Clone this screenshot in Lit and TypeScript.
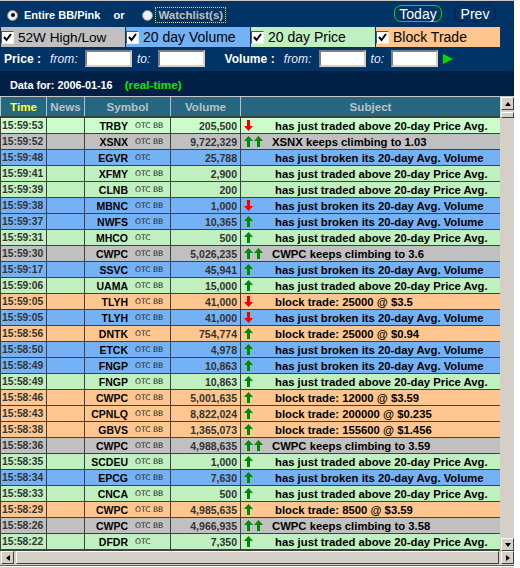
import { LitElement, html, css, svg } from "lit";
import { customElement } from "lit/decorators.js";

type Kind = "g" | "l" | "b" | "o" | "s";
const P = "has just traded above 20-day Price Avg.";
const V = "has just broken its 20-day Avg. Volume";
const ROWS: [string, string, string, string, string, Kind, string][] = [
  ["15:59:53", "TRBY", "OTC BB", "205,500", P, "l", "d"],
  ["15:59:52", "XSNX", "OTC BB", "9,722,329", "XSNX keeps climbing to 1.03", "s", "uu"],
  ["15:59:48", "EGVR", "OTC", "25,788", V, "b", ""],
  ["15:59:41", "XFMY", "OTC BB", "2,900", P, "g", ""],
  ["15:59:39", "CLNB", "OTC BB", "200", P, "g", ""],
  ["15:59:38", "MBNC", "OTC BB", "1,000", V, "b", "d"],
  ["15:59:37", "NWFS", "OTC BB", "10,365", V, "b", "u"],
  ["15:59:31", "MHCO", "OTC", "500", P, "g", "u"],
  ["15:59:30", "CWPC", "OTC BB", "5,026,235", "CWPC keeps climbing to 3.6", "s", "uu"],
  ["15:59:17", "SSVC", "OTC BB", "45,941", V, "b", "u"],
  ["15:59:06", "UAMA", "OTC BB", "15,000", P, "g", "u"],
  ["15:59:05", "TLYH", "OTC BB", "41,000", "block trade: 25000 @ $3.5", "o", "d"],
  ["15:59:05", "TLYH", "OTC BB", "41,000", V, "b", "d"],
  ["15:58:56", "DNTK", "OTC", "754,774", "block trade: 25000 @ $0.94", "o", "u"],
  ["15:58:50", "ETCK", "OTC BB", "4,978", V, "b", "u"],
  ["15:58:49", "FNGP", "OTC BB", "10,863", V, "b", "u"],
  ["15:58:49", "FNGP", "OTC BB", "10,863", P, "g", "u"],
  ["15:58:46", "CWPC", "OTC BB", "5,001,635", "block trade: 12000 @ $3.59", "o", "u"],
  ["15:58:43", "CPNLQ", "OTC BB", "8,822,024", "block trade: 200000 @ $0.235", "o", "u"],
  ["15:58:38", "GBVS", "OTC BB", "1,365,073", "block trade: 155600 @ $1.456", "o", "u"],
  ["15:58:36", "CWPC", "OTC BB", "4,988,635", "CWPC keeps climbing to 3.59", "s", "uu"],
  ["15:58:35", "SCDEU", "OTC BB", "1,000", P, "g", "u"],
  ["15:58:34", "EPCG", "OTC BB", "7,630", V, "b", "u"],
  ["15:58:33", "CNCA", "OTC BB", "500", P, "g", "u"],
  ["15:58:29", "CWPC", "OTC BB", "4,985,635", "block trade: 8500 @ $3.59", "o", "u"],
  ["15:58:26", "CWPC", "OTC BB", "4,966,935", "CWPC keeps climbing to 3.58", "s", "uu"],
  ["15:58:22", "DFDR", "OTC", "7,350", P, "g", "u"],
];

const up = svg`<path d="M4.5 0 L9 5 H6 V11 H3 V5 H0 Z" fill="#008a00"/>`;
const down = svg`<path d="M3 0 H6 V6 H9 L4.5 11 L0 6 H3 Z" fill="#ee0000"/>`;
const arrow = (c: string) =>
  html`<svg class="arr" width="9" height="11" viewBox="0 0 9 11">${c === "u" ? up : down}</svg>`;

@customElement("app-root")
export class AppRoot extends LitElement {
  static styles = css`
    :host { display: block; width: 514px; height: 568px; background: #d4d0c8; font-family: "Liberation Sans", sans-serif; overflow: hidden; }
    .top { background: #003366; border-top: 1px solid #c8c8c8; height: 70px; display: flex; flex-direction: column; color: #fff; }
    .r1 { height: 26px; display: flex; align-items: center; padding: 2px 0 0 7px; box-sizing: border-box; font: bold 11px "Liberation Sans", sans-serif; position: relative; }
    .radio { width: 9px; height: 9px; border-radius: 50%; background: #eeeeee; border: 1px solid #8a8a8a; display: flex; align-items: center; justify-content: center; box-sizing: content-box; flex: none; }
    .radio i { width: 4px; height: 4px; border-radius: 50%; background: #000; display: block; }
    .t1 { margin-left: 6px; }
    .or { margin-left: 13px; }
    .rw { margin-left: 18px; }
    .t2 { margin-left: 3px; padding: 1px 2px; color: #c0c0c0; outline: 1px dotted #dddd99; font-size: 11.5px; }
    .pill { position: absolute; top: 4px; height: 17px; border-radius: 7px; font: 14px "Liberation Sans", sans-serif; color: #fff; display: flex; align-items: center; justify-content: center; box-sizing: border-box; }
    .today { left: 394px; width: 48px; border: 1px solid #00dd00; }
    .prev { left: 454px; width: 42px; border: 1px solid #001a40; }
    .r2 { height: 20px; display: flex; padding-left: 1px; gap: 1px; }
    .cb { display: flex; align-items: center; font: 14px "Liberation Sans", sans-serif; color: #000; box-sizing: border-box; width: 124px; }
    .c1 { font-size: 13.6px; }
    .cb u { width: 13px; height: 13px; margin-right: 4px; background: #fff; border: 1px solid; border-color: #555 #eee #eee #555; display: flex; align-items: center; justify-content: center; flex: none; text-decoration: none; box-sizing: border-box; }
    .cb u svg { display: block; }
    .c1 { background: #c0c0c0; }
    .c2 { background: #75b2f5; }
    .c3 { background: #c0efc0; }
    .c4 { background: #ffc78f; }
    .r3 { height: 23px; display: flex; align-items: center; padding-left: 4px; }
    .lab { font: bold 12px "Liberation Sans", sans-serif; letter-spacing: 0.05px; }
    .it { font: italic 12px "Liberation Sans", sans-serif; letter-spacing: 0.1px; color: #eef; }
    .from { margin-left: 9px; }
    .to { margin-left: 5px; }
    .inp { width: 47px; height: 17px; box-sizing: border-box; background: #fff; border: 2px solid; border-color: #808080 #d4d0c8 #d4d0c8 #808080; margin-left: 7px; }
    .vl { margin-left: 20px; }
    .dark { height: 25px; background: #001f44; color: #fff; font: bold 10.8px "Liberation Sans", sans-serif; display: flex; align-items: center; padding: 2px 0 0 10px; box-sizing: border-box; }
    .dark b { color: #00ee00; margin-left: 12px; font-size: 11.8px; }
    .main { display: flex; height: 454px; border-top: 1px solid #c8c8c8; }
    .tbl { width: 500px; flex: none; display: flex; flex-direction: column; overflow: hidden; background: #404040; }
    .row { display: grid; grid-template-columns: 45px 37px 85px 69px 1fr; column-gap: 1px; height: 15px; margin-bottom: 1px; font: bold 11.3px "Liberation Sans", sans-serif; flex: none; padding-left: 1px; }
    .row > div { display: flex; align-items: center; overflow: hidden; white-space: nowrap; }
    .head { height: 19px; margin-bottom: 2px; color: #b8c4cc; font-size: 11.6px; background: #b8c0c8; }
    .head > div { justify-content: center; height: 19px; background: #266680; }
    .head .time { color: #ffff33; }
    .g > div { background: #c0efc0; } .l > div { background: #ccfccc; } .b > div { background: #75b2f5; } .o > div { background: #ffc78f; } .s > div { background: #c0c0c0; }
    .tm { color: #333; padding-left: 1px; font-size: 10.3px; }
    .sym span { width: 43px; text-align: right; color: #000; font-size: 10.5px; flex: none; }
    .sym small { font: 7.6px "DejaVu Sans", sans-serif; color: #222; margin-left: 7px; }
    .vol { justify-content: flex-end; padding-right: 3px; color: #333; font-size: 10.5px; }
    .subj { color: #000; }
    .ar { width: 25px; flex: none; display: flex; gap: 1px; padding-left: 3px; box-sizing: border-box; align-items: center; }
    .arr { display: block; flex: none; }
    .msg { margin-left: 9px; }
    .msgs { margin-left: 6px; }
    .vs { width: 14px; flex: none; background: #d4d0c8; display: flex; flex-direction: column; padding-left: 1px; box-sizing: border-box; }
    .btn { width: 13px; height: 13px; flex: none; box-sizing: border-box; background: #d4d0c8; border: 1px solid; border-color: #fff #404040 #404040 #fff; display: flex; align-items: center; justify-content: center; }
    .thumb { height: 6px; width: 13px; margin-top: 2px; box-sizing: border-box; background: #d4d0c8; border: 1px solid; border-color: #fff #404040 #404040 #fff; }
    .fill { flex: 1; }
    .hs { height: 14px; display: flex; padding-left: 1px; border-bottom: 1px solid #606060; }
    .hs .thumb { flex: 1; height: 13px; width: auto; margin: 0 2px 0 2px; }
    .end { height: 3px; background: #d4d0c8; border-top: 1px solid #fff; }
    .tri { width: 0; height: 0; border: 3px solid transparent; display: block; }
    .tu { border-bottom: 4px solid #000; border-top: 0; }
    .td { border-top: 4px solid #000; border-bottom: 0; }
    .tl { border-right: 4px solid #000; border-left: 0; }
    .tr { border-left: 4px solid #000; border-right: 0; }
    .go { width: 0; height: 0; border-left: 10px solid #00dd00; border-top: 5px solid transparent; border-bottom: 5px solid transparent; margin-left: 5px; }
  `;

  cb(cls: string, t: string) {
    return html`<div class="cb ${cls}"><u><svg width="9" height="9" viewBox="0 0 9 9"><path d="M1 4 L3.5 7 L8 1" fill="none" stroke="#000" stroke-width="2"/></svg></u>${t}</div>`;
  }

  render() {
    return html`
      <div class="top">
        <div class="r1">
          <span class="radio"><i></i></span><span class="t1">Entire BB/Pink</span><span class="or">or</span>
          <span class="radio rw"></span><span class="t2">Watchlist(s)</span>
          <div class="pill today">Today</div><div class="pill prev">Prev</div>
        </div>
        <div class="r2">${this.cb("c1", "52W High/Low")}${this.cb("c2", "20 day Volume")}${this.cb("c3", "20 day Price")}${this.cb("c4", "Block Trade")}</div>
        <div class="r3">
          <span class="lab">Price :</span><span class="it from">from:</span><span class="inp"></span><span class="it to">to:</span><span class="inp"></span>
          <span class="lab vl">Volume :</span><span class="it from">from:</span><span class="inp"></span><span class="it to">to:</span><span class="inp"></span><span class="go"></span>
        </div>
      </div>
      <div class="dark">Data for: 2006-01-16 <b>(real-time)</b></div>
      <div class="main">
        <div class="tbl">
          <div class="row head"><div class="time">Time</div><div>News</div><div>Symbol</div><div>Volume</div><div>Subject</div></div>
          ${ROWS.map((r) => html`<div class="row ${r[5]}">
            <div class="tm">${r[0]}</div><div></div>
            <div class="sym"><span>${r[1]}</span><small>${r[2]}</small></div>
            <div class="vol">${r[3]}</div>
            <div class="subj"><span class="ar">${[...r[6]].map(arrow)}</span><span class="${r[5] === "s" ? "msgs" : "msg"}">${r[4]}</span></div>
          </div>`)}
        </div>
        <div class="vs"><div class="btn"><i class="tri tu"></i></div><div class="thumb"></div><div class="fill"></div><div class="btn"><i class="tri td"></i></div></div>
      </div>
      <div class="hs"><div class="btn"><i class="tri tl"></i></div><div class="thumb"></div><div class="btn"><i class="tri tr"></i></div></div>
      <div class="end"></div>
    `;
  }
}
